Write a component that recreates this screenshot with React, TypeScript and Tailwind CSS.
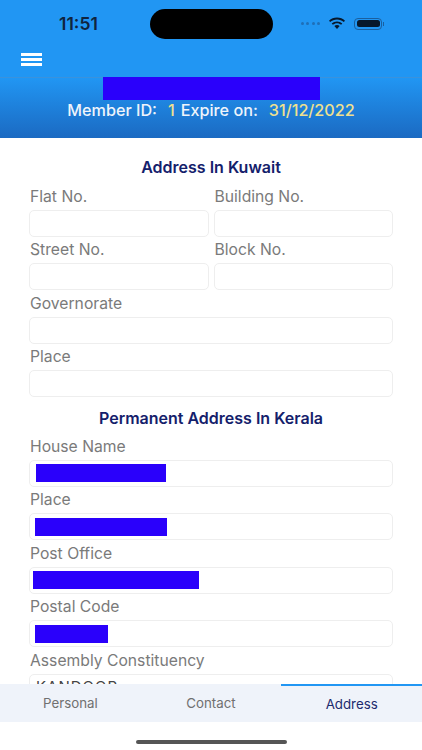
// App.tsx
//
// Member profile screen, Address tab. Header with member id, scrolling form
// clipped by the bottom tab bar.

const FONT = "font-['Inter','Noto_Sans',sans-serif]";

interface FieldProps {
  label: string;
  value?: string;
  redact?: number;
  redactLeft?: number;
}

function Field({ label, value, redact, redactLeft = 6 }: FieldProps) {
  return (
    <div className="min-w-0 flex-1">
      <div className="h-[26.5px] pl-[1px] pt-[3.500px] text-[15.700px] leading-[20px] text-[#7a7a7a]">{label}</div>
      <div className="flex h-[27px] items-center rounded-[5px] border border-[#eeeeee] bg-white">
        {redact ? (
          <div className="h-[18px] bg-[#2a00fb]" style={{ width: redact, marginLeft: redactLeft }} />
        ) : null}
        {value ? <span className="pl-[6px] pt-[1px] text-[15px] tracking-[1px] text-[#444444]">{value}</span> : null}
      </div>
    </div>
  );
}

function Heading({ children }: { children: string }) {
  return <div className="text-center text-[16px] font-semibold leading-[20px] text-[#14206b]">{children}</div>;
}

function StatusBar() {
  return (
    <div className="relative flex h-[47px] items-center pl-[59px] pr-[38px]">
      <span className="text-[17.500px] font-semibold leading-[22px] text-[#10243e]">11:51</span>
      <div className="absolute left-[150px] top-[9px] h-[30px] w-[123px] rounded-full bg-black" />
      <div className="ml-auto flex items-center gap-[8px]">
        <div className="flex gap-[2.500px]">
          <span className="h-[3px] w-[3px] rounded-full bg-[#1f6fb8]" />
          <span className="h-[3px] w-[3px] rounded-full bg-[#1f6fb8]" />
          <span className="h-[3px] w-[3px] rounded-full bg-[#1f6fb8]" />
          <span className="h-[3px] w-[3px] rounded-full bg-[#1f6fb8]" />
        </div>
        <svg width="18" height="13" viewBox="0 0 18 13" fill="#07182c">
          <path d="M9 2.400c2.600 0 5 1 6.800 2.700l1.200-1.300C14.900 1.800 12.100.6 9 .6S3.100 1.800 1 3.800l1.200 1.300C4 3.400 6.400 2.400 9 2.400z" />
          <path d="M9 6.200c1.600 0 3 .6 4.100 1.600l1.200-1.300C12.900 5.200 11 4.400 9 4.400s-3.900.8-5.300 2.100l1.200 1.300C6 6.800 7.400 6.200 9 6.200z" />
          <path d="M9 8.100c-1 0-1.900.4-2.600 1L9 12l2.600-2.900c-.7-.6-1.600-1-2.600-1z" />
        </svg>
        <div className="flex items-center gap-[1px]">
          <div className="flex h-[12px] w-[28px] items-center rounded-[4px] border border-[#1a5f9e] p-[1.500px]">
            <div className="h-full w-full rounded-[2.500px] bg-[#07182c]" />
          </div>
          <div className="h-[4px] w-[1px] bg-[#1a5f9e]" />
        </div>
      </div>
    </div>
  );
}

function Header() {
  return (
    <header className="bg-[#2196f3]">
      <StatusBar />
      <div className="flex h-[31px] items-start border-b border-[#3a92dc] pl-[21px] pt-[6px]">
        <div className="flex w-[21px] flex-col gap-[2.500px]">
          <span className="h-[2.500px] bg-white" />
          <span className="h-[2.500px] bg-white" />
          <span className="h-[2.500px] bg-white" />
        </div>
      </div>
      <div className="flex h-[60px] flex-col items-center bg-gradient-to-b from-[#2196f3] to-[#1b6ac2]">
        <div className="-mt-[1px] h-[23px] w-[217px] bg-[#2a00fb]" />
        <div className="flex text-[16.200px] font-medium leading-[20px] text-[#eef4fb]">
          <span>Member ID:</span>
          <span className="ml-[11px] text-[#efe08f]">1</span>
          <span className="ml-[6px]">Expire on:</span>
          <span className="ml-[11px] text-[#efe08f]">31/12/2022</span>
        </div>
      </div>
    </header>
  );
}

function TabBar() {
  return (
    <nav className="flex h-[38px] bg-[#eff3fa] text-[13.300px] leading-[18px]">
      <div className="flex flex-1 items-center justify-center text-[#707070]">Personal</div>
      <div className="flex flex-1 items-center justify-center text-[#707070]">Contact</div>
      <div className="flex flex-1 items-center justify-center border-t-2 border-[#2196f3] text-[#1c2a6e]">Address</div>
    </nav>
  );
}

export default function App() {
  return (
    <div className={`flex h-[750px] w-[422px] flex-col overflow-hidden bg-white ${FONT}`}>
      <Header />
      <main className="h-[546px] overflow-hidden px-[29px] pt-[19px]">
        <Heading>Address In Kuwait</Heading>
        <div className="mt-[6px] flex flex-col">
          <div className="flex gap-[5px]">
            <Field label="Flat No." />
            <Field label="Building No." />
          </div>
          <div className="flex gap-[5px]">
            <Field label="Street No." />
            <Field label="Block No." />
          </div>
          <Field label="Governorate" />
          <Field label="Place" />
        </div>
        <div className="mt-[11px]">
          <Heading>Permanent Address In Kerala</Heading>
        </div>
        <div className="mt-[5px] flex flex-col">
          <Field label="House Name" redact={130} />
          <Field label="Place" redact={132} redactLeft={5} />
          <Field label="Post Office" redact={166} redactLeft={3} />
          <Field label="Postal Code" redact={73} redactLeft={5} />
          <Field label="Assembly Constituency" value="KANDOOR" />
        </div>
      </main>
      <TabBar />
      <div className="flex flex-1 items-end justify-center pb-[6px]">
        <div className="h-[4px] w-[151px] rounded-full bg-[#555555]" />
      </div>
    </div>
  );
}
